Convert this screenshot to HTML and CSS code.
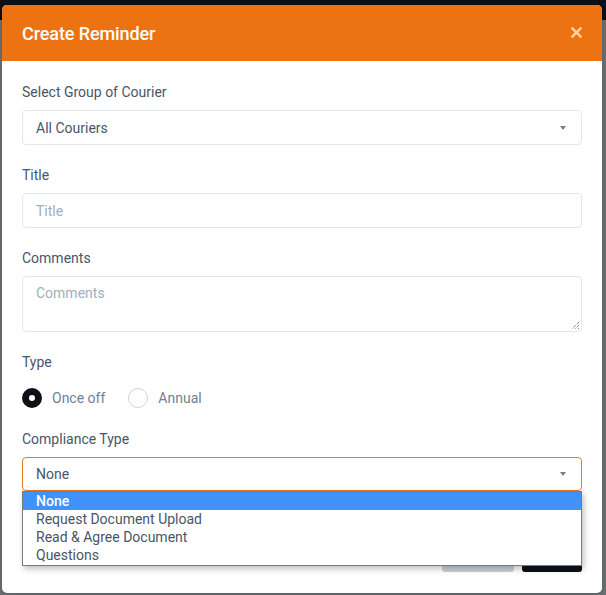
FILE: index.html
```html
<!DOCTYPE html>
<html>
<head>
<meta charset="utf-8">
<link rel="stylesheet" href="styles.css">
</head>
<body>
<div class="backdrop">
  <div class="modal">
    <div class="modal-header">
      <h1 class="modal-title">Create Reminder</h1>
      <button class="close-btn" aria-label="Close">
        <svg width="11" height="11" viewBox="0 0 11 11"><path d="M1.5 1.5 L9.5 9.5 M9.5 1.5 L1.5 9.5" stroke="#f9d7bb" stroke-width="2.4" stroke-linecap="square"/></svg>
      </button>
    </div>
    <div class="modal-body">
      <div class="field">
        <label class="label">Select Group of Courier</label>
        <div class="select"><span>All Couriers</span><span class="caret"></span></div>
      </div>
      <div class="field">
        <label class="label">Title</label>
        <div class="input placeholder">Title</div>
      </div>
      <div class="field">
        <label class="label">Comments</label>
        <div class="textarea placeholder">Comments
          <svg class="grip" width="10" height="10" viewBox="0 0 10 10"><path d="M9 2 L2 9 M9 5 L5 9 M9 8 L8 9" stroke="#555" stroke-width="1" stroke-dasharray="1 1"/></svg>
        </div>
      </div>
      <div class="field">
        <label class="label">Type</label>
        <div class="radios">
          <div class="radio-item"><span class="radio checked"></span><span class="radio-text">Once off</span></div>
          <div class="radio-item"><span class="radio"></span><span class="radio-text">Annual</span></div>
        </div>
      </div>
      <div class="field compliance">
        <label class="label">Compliance Type</label>
        <div class="select focused"><span>None</span><span class="caret"></span></div>
        <ul class="dropdown">
          <li class="active">None</li>
          <li>Request Document Upload</li>
          <li>Read &amp; Agree Document</li>
          <li>Questions</li>
        </ul>
      </div>
      <div class="actions">
        <button class="btn btn-cancel">Cancel</button>
        <button class="btn btn-save">Save</button>
      </div>
    </div>
  </div>
</div>
</body>
</html>
```
FILE: styles.css
```css
* { box-sizing: border-box; }
html, body { margin: 0; padding: 0; }
body {
  width: 606px;
  height: 595px;
  overflow: hidden;
  font-family: Roboto, "Liberation Sans", sans-serif;
  background: linear-gradient(#0c1015 0, #0c1015 20px, #6d7272 20px);
}
.backdrop {
  padding: 5px 4px 2px 2px;
}
.modal {
  width: 600px;
  height: 588px;
  background: #fff;
  border-radius: 5px;
  overflow: hidden;
  box-shadow: 0 2px 8px rgba(0,0,0,0.2);
}
.modal-header {
  height: 56px;
  background: #ed7211;
  display: flex;
  align-items: center;
  justify-content: space-between;
  padding: 0 20px 0 20px;
}
.modal-title {
  margin: 0;
  color: #fff;
  font-size: 18px;
  font-weight: 500;
  letter-spacing: -0.1px;
}
.close-btn {
  background: none;
  border: 0;
  padding: 0;
  display: flex;
  margin-top: -2px;
}
.modal-body {
  padding: 21px 20px 20px 20px;
  display: flex;
  flex-direction: column;
}
.field { display: flex; flex-direction: column; margin-bottom: 20px; }
.label {
  font-size: 14px;
  line-height: 20px;
  color: #4a5568;
  margin-bottom: 8px;
}
.select, .input {
  height: 35px;
  border: 1px solid #e2e8f0;
  border-radius: 4px;
  display: flex;
  align-items: center;
  justify-content: space-between;
  padding: 0 14px 0 13px;
  font-size: 14px;
  color: #4a5568;
}
.placeholder { color: #a0aec0; font-size: 14px; }
.textarea {
  position: relative;
  height: 56px;
  border: 1px solid #e2e8f0;
  border-radius: 4px;
  padding: 7px 13px;
  line-height: 18px;
}
.grip { position: absolute; right: 1px; bottom: 1px; }
.caret {
  width: 0; height: 0;
  border-left: 3.5px solid transparent;
  border-right: 3.5px solid transparent;
  border-top: 4px solid #718096;
  margin-right: 1px;
}
.radios { display: flex; align-items: center; gap: 23px; margin-top: 8px; margin-bottom: 1px; }
.radio-item { display: flex; align-items: center; gap: 10px; }
.radio {
  width: 20px; height: 20px;
  border-radius: 50%;
  border: 1px solid #cbd5e0;
  background: #fff;
  display: inline-block;
}
.radio.checked {
  border: 7px solid #0d1117;
  background: #fff;
}
.radio-text { font-size: 14px; color: #718096; line-height: 20px; }
.compliance { position: relative; margin-bottom: 45px; }
.select.focused { border-color: #ec7a22; height: 34px; }
.dropdown {
  position: absolute;
  left: 0; right: 0;
  top: 62px;
  margin: 0;
  padding: 0 0 1px 0;
  list-style: none;
  background: #fff;
  border: 1px solid #7b7b7b;
  box-shadow: 2px 3px 6px rgba(0,0,0,0.25);
  z-index: 5;
}
.dropdown li {
  height: 18px;
  line-height: 18px;
  font-size: 14px;
  padding-left: 13px;
  color: #4a5568;
}
.dropdown li.active { background: #4092f9; color: #fff; font-weight: 500; }
.actions { display: flex; justify-content: flex-end; gap: 8px; }
.btn {
  height: 36px;
  border: 0;
  border-radius: 3px;
  font-family: Roboto, sans-serif;
  font-size: 14px;
  padding: 0;
}
.btn-cancel { width: 72px; background: #cbd2d9; color: #4a5568; }
.btn-save { width: 60px; background: #0d1117; color: #fff; }
```
